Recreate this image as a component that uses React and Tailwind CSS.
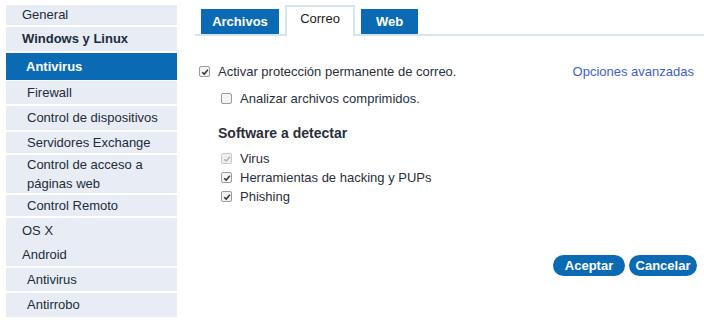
import React, { useState } from "react";

const font = { fontFamily: '"Liberation Sans", Arial, sans-serif' };

const Check = ({ checked, disabled }) => (
  <span
    className={`flex h-[11px] w-[11px] items-center justify-center rounded-[2px] border ${
      disabled ? "border-[#c8c8c8] bg-[#f0f0f0]" : "border-[#9a9a9a] bg-[#f3f3f3]"
    }`}
  >
    {checked && (
      <svg viewBox="0 0 10 10" className="h-[8px] w-[8px]">
        <path
          d="M1.5 5.2 L4 7.6 L8.6 2.2"
          fill="none"
          stroke={disabled ? "#b5b5b5" : "#333"}
          strokeWidth="1.8"
        />
      </svg>
    )}
  </span>
);

// h = full row height incl. the 2px white separator
const SideItem = ({ label, sub, bold, h, noBorder }) => (
  <div
    className={`flex items-center bg-[#e8edf5] text-[#222b38] ${noBorder ? "" : "border-b-2 border-white"} ${
      sub ? "pl-[21px]" : "pl-[16px]"
    } ${bold ? "font-bold" : ""} ${h}`}
  >
    {label}
  </div>
);

export default function App() {
  const [tab, setTab] = useState("Correo");
  return (
    <div className="flex h-[325px] w-[704px] bg-white text-[13px]" style={font}>
      {/* Sidebar */}
      <div className="ml-[6px] mt-[5px] w-[171px] flex flex-col">
        <SideItem label="General" h="h-[22px]" />
        <SideItem label="Windows y Linux" bold h="h-[26px]" />
        <div className="flex h-[28px] items-center border-b-[1px] border-white bg-[#0b6ab4] pl-[20px] font-bold text-white">
          Antivirus
        </div>
        <SideItem label="Firewall" sub h="h-[25px]" />
        <SideItem label="Control de dispositivos" sub h="h-[26px]" />
        <SideItem label="Servidores Exchange" sub h="h-[23px]" />
        <div className="flex h-[40px] flex-col justify-center border-b-2 border-white bg-[#e8edf5] pl-[21px] leading-[19px] text-[#222b38]">
          <span>Control de acceso a</span>
          <span>páginas web</span>
        </div>
        <SideItem label="Control Remoto" sub h="h-[23px]" />
        <SideItem label="OS X" noBorder h="h-[25px]" />
        <SideItem label="Android" h="h-[25px]" />
        <SideItem label="Antivirus" sub h="h-[25px]" />
        <SideItem label="Antirrobo" sub noBorder h="h-[24px]" />
      </div>

      {/* Main */}
      <div className="ml-[18px] flex-1 flex flex-col">
        <div className="mt-[5px] flex items-end gap-[6px] border-b-2 border-[#d6e4f0] pl-[6px]">
          {["Archivos", "Correo", "Web"].map((t) =>
            t === tab ? (
              <button
                key={t}
                onClick={() => setTab(t)}
                className="-mb-[2px] h-[31px] w-[70px] border-2 border-b-0 border-[#d6e4f0] bg-white pb-[6px] text-[13px] text-[#1b1b1b]"
              >
                {t}
              </button>
            ) : (
              <button
                key={t}
                onClick={() => setTab(t)}
                className={`h-[25px] ${t === "Web" ? "w-[57px]" : "w-[78px]"} bg-[#0b6ab4] pt-[1px] text-[13px] font-bold text-white`}
              >
                {t}
              </button>
            )
          )}
        </div>

        <div className="mt-[26px] flex items-center pr-[10px] text-[#2a2f3a]">
          <div className="ml-[4px] mr-[8px]">
            <Check checked />
          </div>
          <span>Activar protección permanente de correo.</span>
          <span className="ml-auto text-[#3d5fc9]">Opciones avanzadas</span>
        </div>
        <div className="mt-[7px] ml-[26px] flex items-center text-[#2a2f3a]">
          <div className="mr-[8px]">
            <Check />
          </div>
          <span>Analizar archivos comprimidos.</span>
        </div>

        <div className="mt-[15px] ml-[23px] font-bold text-[14px] text-[#2a2f3a]">
          Software a detectar
        </div>
        <div className="mt-[7px] ml-[26px] flex flex-col gap-[4px] text-[#2a2f3a]">
          <div className="flex items-center h-[15px]">
            <div className="mr-[8px]">
              <Check checked disabled />
            </div>
            <span>Virus</span>
          </div>
          <div className="flex items-center h-[15px]">
            <div className="mr-[8px]">
              <Check checked />
            </div>
            <span>Herramientas de hacking y PUPs</span>
          </div>
          <div className="flex items-center h-[15px]">
            <div className="mr-[8px]">
              <Check checked />
            </div>
            <span>Phishing</span>
          </div>
        </div>

        <div className="mt-[51px] flex justify-end gap-[4px] pr-[7px]">
          <button className="h-[21px] w-[72px] rounded-full bg-[#0b6ab4] font-bold text-white">
            Aceptar
          </button>
          <button className="h-[21px] w-[68px] rounded-full bg-[#0b6ab4] font-bold text-white">
            Cancelar
          </button>
        </div>
      </div>
    </div>
  );
}
